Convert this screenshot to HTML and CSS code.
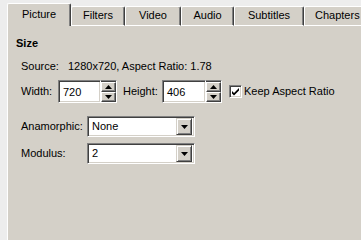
FILE: index.html
```
<!DOCTYPE html>
<html>
<head>
<meta charset="utf-8">
<link rel="stylesheet" href="styles.css">
</head>
<body>
<div class="window">
  <div class="tabs">
    <div class="tab active t-picture">Picture</div>
    <div class="tab t-filters">Filters</div>
    <div class="tab t-video">Video</div>
    <div class="tab t-audio">Audio</div>
    <div class="tab t-subs">Subtitles</div>
    <div class="tab t-chapters">Chapters</div>
  </div>
  <div class="panel">
    <div class="heading">Size</div>
    <div class="group">
      <div class="source"><span class="src-label">Source:</span><span>1280x720, Aspect Ratio: 1.78</span></div>
      <div class="row dims">
        <span class="lbl lbl-width">Width:</span>
        <div class="field num"><span>720</span></div>
        <div class="spin">
          <div class="sbtn"><svg width="7" height="4" viewBox="0 0 7 4"><path d="M3.5 0 L7 4 L0 4 Z" fill="#000"/></svg></div>
          <div class="sbtn"><svg width="7" height="4" viewBox="0 0 7 4"><path d="M0 0 L7 0 L3.5 4 Z" fill="#000"/></svg></div>
        </div>
        <span class="lbl lbl-height">Height:</span>
        <div class="field num num2"><span>406</span></div>
        <div class="spin">
          <div class="sbtn"><svg width="7" height="4" viewBox="0 0 7 4"><path d="M3.5 0 L7 4 L0 4 Z" fill="#000"/></svg></div>
          <div class="sbtn"><svg width="7" height="4" viewBox="0 0 7 4"><path d="M0 0 L7 0 L3.5 4 Z" fill="#000"/></svg></div>
        </div>
        <div class="check"><svg width="9" height="9" viewBox="0 0 9 9"><path d="M1 4 L3 6 L8 1 L8 3.5 L3 8.5 L1 6.5 Z" fill="#000"/></svg></div>
        <span class="check-label">Keep Aspect Ratio</span>
      </div>
      <div class="row combo-row first">
        <span class="lbl lbl-combo">Anamorphic:</span>
        <div class="field combo"><span class="cval">None</span><div class="dbtn"><svg width="7" height="4" viewBox="0 0 7 4"><path d="M0 0 L7 0 L3.5 4 Z" fill="#000"/></svg></div></div>
      </div>
      <div class="row combo-row">
        <span class="lbl lbl-combo">Modulus:</span>
        <div class="field combo"><span class="cval">2</span><div class="dbtn"><svg width="7" height="4" viewBox="0 0 7 4"><path d="M0 0 L7 0 L3.5 4 Z" fill="#000"/></svg></div></div>
      </div>
    </div>
  </div>
</div>
</body>
</html>
```
FILE: styles.css
```
* { box-sizing: border-box; }
html, body { margin: 0; padding: 0; }
body {
  width: 361px;
  min-height: 100vh;
  overflow: hidden;
  background: #ededed;
  font-family: "Liberation Sans", Arial, sans-serif;
  font-size: 11px;
  line-height: 13px;
  color: #000;
}
.window {
  padding: 3px 0 0 7px;
  min-height: 100vh;
  display: flex;
  flex-direction: column;
}
.tabs {
  display: flex;
  align-items: flex-end;
  height: 23px;
  flex: none;
}
.tab {
  height: 20px;
  background: #d4d0c8;
  border-top: 1px solid #ffffff;
  border-left: 1px solid #ffffff;
  border-right: 1px solid #404040;
  border-bottom: 1px solid #ffffff;
  box-shadow: inset -1px 0 0 #808080;
  border-radius: 2px 2px 0 0;
  display: flex;
  align-items: center;
  justify-content: center;
  padding-bottom: 1px;
  white-space: nowrap;
  flex: none;
}
.tab.active {
  height: 23px;
  border-bottom: none;
  padding-bottom: 1px;
}
.t-picture { width: 64px; }
.t-filters { width: 54px; }
.t-video { width: 56px; }
.t-audio { width: 53px; }
.t-subs { width: 70px; }
.t-chapters { width: 64px; justify-content: flex-start; padding-left: 10px; }
.panel {
  flex: 1;
  background: #d4d0c8;
  border-left: 1px solid #ffffff;
  padding: 11px 0 0 8px;
}
.heading {
  font-weight: bold;
  height: 13px;
}
.group {
  padding-left: 5px;
}
.source {
  margin-top: 10px;
  display: flex;
}
.src-label { width: 47px; }
.row {
  display: flex;
  align-items: center;
}
.dims { margin-top: 7px; height: 23px; }
.lbl-width { width: 37px; }
.lbl-height { width: 39px; margin-left: 6px; }
.field {
  background: #ffffff;
  border-top: 1px solid #808080;
  border-left: 1px solid #808080;
  border-right: 1px solid #ffffff;
  border-bottom: 1px solid #ffffff;
  box-shadow: inset 1px 1px 0 #404040, inset -1px -1px 0 #d4d0c8;
  display: flex;
  align-items: center;
}
.num {
  width: 43px;
  height: 23px;
  padding-left: 4px;
  padding-top: 1px;
}
.num2 { width: 44px; }
.spin {
  width: 16px;
  height: 23px;
  display: flex;
  flex-direction: column;
  border-top: 1px solid #808080;
  border-bottom: 1px solid #ffffff;
  border-right: 1px solid #ffffff;
  box-shadow: inset 0 1px 0 #404040;
  background: #d4d0c8;
  padding-top: 1px;
}
.sbtn {
  flex: 1;
  background: #d4d0c8;
  border-top: 1px solid #ffffff;
  border-left: 1px solid #ffffff;
  border-right: 1px solid #404040;
  border-bottom: 1px solid #404040;
  box-shadow: inset -1px -1px 0 #808080;
  display: flex;
  align-items: center;
  justify-content: center;
}
.sbtn svg { display: block; }
.check {
  width: 13px;
  height: 13px;
  margin-left: 7px;
  background: #fff;
  border-top: 1px solid #808080;
  border-left: 1px solid #808080;
  border-right: 1px solid #ffffff;
  border-bottom: 1px solid #ffffff;
  box-shadow: inset 1px 1px 0 #404040, inset -1px -1px 0 #d4d0c8;
  display: flex;
  align-items: center;
  justify-content: center;
}
.check svg { display: block; }
.check-label { margin-left: 2px; }
.combo-row { height: 21px; }
.combo-row.first { margin-top: 13px; }
.combo-row + .combo-row { margin-top: 6px; }
.lbl-combo { width: 66px; }
.combo {
  width: 108px;
  height: 21px;
  padding: 2px 2px 2px 4px;
  justify-content: space-between;
}
.dbtn {
  width: 16px;
  height: 17px;
  background: #d4d0c8;
  border-top: 1px solid #d4d0c8;
  border-left: 1px solid #d4d0c8;
  border-right: 1px solid #404040;
  border-bottom: 1px solid #404040;
  box-shadow: inset 1px 1px 0 #ffffff, inset -1px -1px 0 #808080;
  display: flex;
  align-items: center;
  justify-content: center;
}
.dbtn svg { display: block; }
```
